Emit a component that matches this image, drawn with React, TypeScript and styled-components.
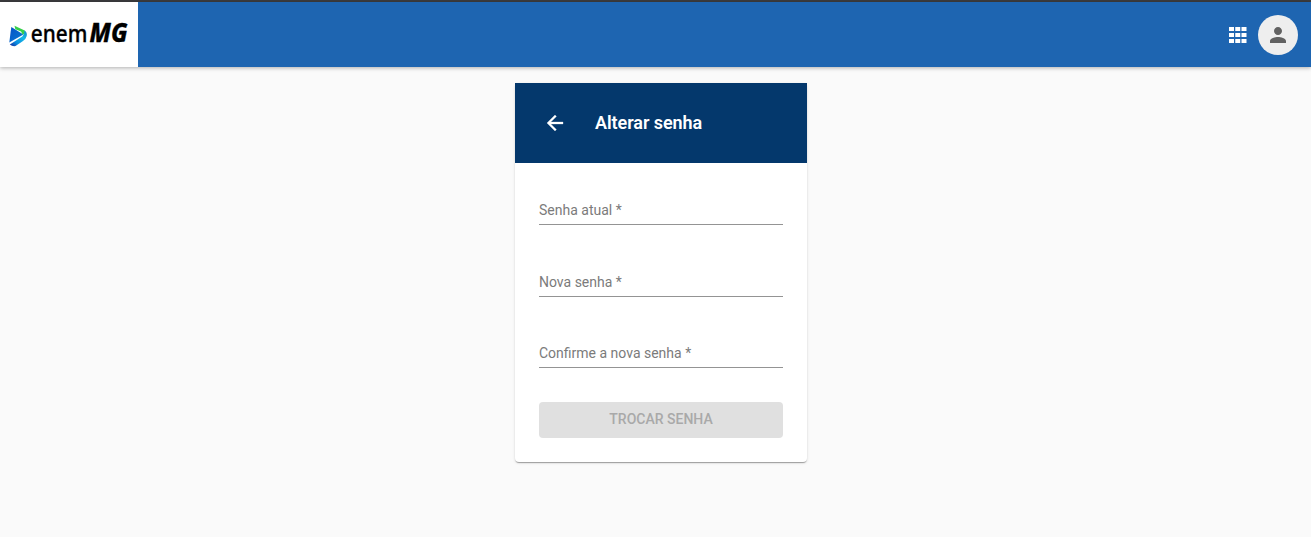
import React, {useState} from "react";
import styled, {createGlobalStyle} from "styled-components";

const GlobalStyle = createGlobalStyle`
    body {
        margin: 0;
        background-color: #fafafa;
        font-family: Roboto, "Liberation Sans", sans-serif;
    }

    *, *::before, *::after {
        box-sizing: border-box;
    }
`;

const Page = styled.div`
    display: flex;
    flex-direction: column;
    min-height: 537px;
    border-top: 2px solid #3c3c3e;
`;

const TopBar = styled.header`
    display: flex;
    align-items: center;
    height: 65px;
    padding-right: 13px;
    background-color: #1e65b1;
    box-shadow: 0 1px 4px rgba(0, 0, 0, 0.3);
`;

const Brand = styled.div`
    width: 138px;
    height: 65px;
    margin-right: auto;
    background-color: #ffffff;
`;

const IconButton = styled.button`
    display: flex;
    align-items: center;
    justify-content: center;
    width: 40px;
    height: 40px;
    padding: 0;
    border: none;
    background: none;
    color: #ffffff;
    cursor: pointer;
`;

const Avatar = styled(IconButton)`
    border-radius: 50%;
    background-color: #eeeeee;
    color: #616161;
`;

const Main = styled.main`
    display: flex;
    justify-content: center;
    padding: 16px 0 0 11px;
`;

const Card = styled.section`
    width: 292px;
    height: 379px;
    border-radius: 4px;
    background-color: #ffffff;
    box-shadow: 0 2px 1px -1px rgba(0, 0, 0, 0.2), 0 1px 1px rgba(0, 0, 0, 0.14), 0 1px 3px rgba(0, 0, 0, 0.12);
`;

const CardHeader = styled.div`
    display: flex;
    align-items: center;
    height: 80px;
    padding: 0 20px;
    background-color: #04386c;
`;

const Title = styled.h1`
    margin: 0 0 0 20px;
    font-size: 18px;
    font-weight: 600;
    letter-spacing: -0.06px;
    line-height: 24px;
    color: #ffffff;
`;

const Form = styled.form`
    padding: 24px;
`;

const Field = styled.label`
    display: block;
    height: 38px;
    margin-bottom: 33.65px;
    border-bottom: 1px solid #949494;
`;

const Input = styled.input`
    display: block;
    width: 100%;
    height: 37px;
    padding: 9px 0 0;
    border: none;
    outline: none;
    background: transparent;
    font-family: inherit;
    font-size: 14px;
    color: rgba(0, 0, 0, 0.87);

    &::placeholder {
        color: #7b7b7b;
        opacity: 1;
    }
`;

const SubmitButton = styled.button`
    display: block;
    width: 100%;
    height: 36px;
    padding: 0 0 1px;
    border: none;
    border-radius: 4px;
    background-color: #e0e0e0;
    font-family: inherit;
    font-size: 14px;
    font-weight: 500;
    text-transform: uppercase;
    color: #a9a9a9;
`;

const LogoText = styled.text`
    font-family: "Noto Sans", "Open Sans", sans-serif;
    fill: #000000;
    stroke: #000000;
    stroke-width: 0.35px;
`;

const Logo = () => (
  <svg width="138" height="65" viewBox="0 2 138 65" role="img" aria-label="enem MG">
    <defs>
      <linearGradient id="play" x1="0" y1="0" x2="1" y2="1">
        <stop offset="0" stopColor="#0752c8"/>
        <stop offset="1" stopColor="#087bd0"/>
      </linearGradient>
      <linearGradient id="ribbon" x1="0" y1="1" x2="1" y2="0">
        <stop offset="0" stopColor="#17259b"/>
        <stop offset="0.3" stopColor="#0a8de0"/>
        <stop offset="0.65" stopColor="#14b9e6"/>
        <stop offset="1" stopColor="#1689c4"/>
      </linearGradient>
    </defs>
    <path d="M11.3 27 L23.4 34.4 L9.3 42.6 Z" fill="url(#play)"/>
    <path d="M14.5 25.8 L24.7 30.6 L25.5 34 L22.6 34.4 L21 31.6 L15.3 29.3 Z" fill="#35cf4a"/>
    <path d="M24.5 30.3 Q27.5 32.5 26.7 36 Q26 39 23 41 L15.5 46 Q12.5 46.6 9.8 44.4 L22.3 36.4 Q24.6 34.2 24.5 30.3 Z" fill="url(#ribbon)"/>
    <LogoText x="30.8" y="41.8" fontSize="23" fontWeight="500" textLength="56.5" lengthAdjust="spacingAndGlyphs">enem</LogoText>
    <LogoText x="89.5" y="41.6" fontSize="26" fontWeight="800" fontStyle="italic" textLength="38" lengthAdjust="spacingAndGlyphs">MG</LogoText>
  </svg>
);

const AppsIcon = () => (
  <svg width="24" height="24" viewBox="0 0 24 24" fill="currentColor">
    {[4, 10, 16].map((y) => [3, 9.25, 15.5].map((x) => (
      <rect key={`${x}-${y}`} x={x} y={y} width="5" height="4"/>
    )))}
  </svg>
);

const PersonIcon = () => (
  <svg width="24" height="24" viewBox="0 0 24 24" fill="currentColor">
    <path d="M12 12c2.21 0 4-1.79 4-4s-1.79-4-4-4-4 1.79-4 4 1.79 4 4 4zm0 2c-2.67 0-8 1.34-8 4v2h16v-2c0-2.66-5.33-4-8-4z"/>
  </svg>
);

const BackIcon = () => (
  <svg width="24" height="24" viewBox="0 0 24 24" fill="currentColor" stroke="currentColor" strokeWidth="0.3">
    <path d="M20 11H7.83l5.59-5.59L12 4l-8 8 8 8 1.41-1.41L7.83 13H20v-2z"/>
  </svg>
);

interface PasswordFieldProps {
    label: string;
    value: string;
    onChange: (value: string) => void;
}

const PasswordField = ({label, value, onChange}: PasswordFieldProps) => (
  <Field>
    <Input
      type="password"
      placeholder={`${label} *`}
      value={value}
      onChange={(e) => onChange(e.target.value)}
    />
  </Field>
);

const App = () => {
  const [current, setCurrent] = useState('');
  const [next, setNext] = useState('');
  const [confirmation, setConfirmation] = useState('');

  // Only enabled once all fields are filled and the new password matches
  const canSubmit = current !== '' && next !== '' && next === confirmation;

  return (
    <Page>
      <GlobalStyle/>
      <TopBar>
        <Brand><Logo/></Brand>
        <IconButton aria-label="Aplicativos"><AppsIcon/></IconButton>
        <Avatar aria-label="Conta"><PersonIcon/></Avatar>
      </TopBar>
      <Main>
        <Card>
          <CardHeader>
            <IconButton aria-label="Voltar"><BackIcon/></IconButton>
            <Title>Alterar senha</Title>
          </CardHeader>
          <Form onSubmit={(e) => e.preventDefault()}>
            <PasswordField label="Senha atual" value={current} onChange={setCurrent}/>
            <PasswordField label="Nova senha" value={next} onChange={setNext}/>
            <PasswordField label="Confirme a nova senha" value={confirmation} onChange={setConfirmation}/>
            <SubmitButton disabled={!canSubmit}>Trocar senha</SubmitButton>
          </Form>
        </Card>
      </Main>
    </Page>
  );
};

export default App;
